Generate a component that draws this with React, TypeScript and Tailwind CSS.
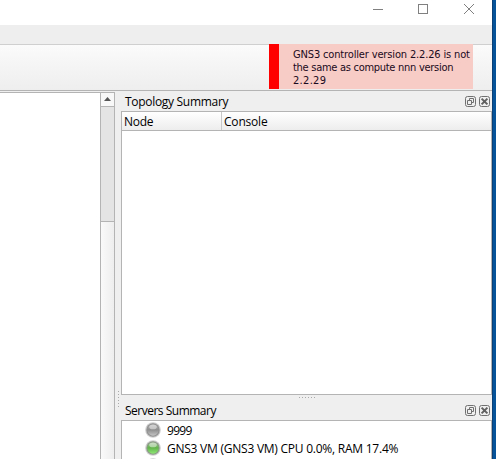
import React from "react";

const ui = "font-['Open_Sans','Noto_Sans',sans-serif] text-[12px] text-black whitespace-nowrap";

function WindowControls() {
  return (
    <svg width="104" height="14" viewBox="0 0 104 14" fill="none" stroke="#808080" className="mr-[16px] mt-[2px]" shapeRendering="crispEdges">
      <path d="M1 7.5h10M46.5 2.5h9v9h-9z" />
      <path d="M92 2l10 10M102 2l-10 10" shapeRendering="auto" />
    </svg>
  );
}

function DockButtons() {
  return (
    <div className="flex gap-[3px] pt-px">
      <svg width="11" height="11" viewBox="0 0 11 11" fill="none" stroke="#707070">
        <rect x=".5" y=".5" width="10" height="10" rx="2" />
        <path d="M4.5 4.5v-2h4v4h-2M2.5 4.5h4v4h-4z" />
      </svg>
      <svg width="11" height="11" viewBox="0 0 11 11" fill="none" stroke="#707070">
        <rect x=".5" y=".5" width="10" height="10" rx="2" />
        <path d="M2.6 2.6l5.8 5.8M8.4 2.6L2.6 8.4" stroke="#606060" strokeWidth="2" />
      </svg>
    </div>
  );
}

function DockTitle({ title, spacing }: { title: string; spacing: string }) {
  return (
    <div className="flex h-[20px] items-center justify-between pl-[4px] pr-[2px]">
      <span className={`${ui} ${spacing} pt-[2px] leading-[20px]`}>{title}</span>
      <DockButtons />
    </div>
  );
}

function Light({ green }: { green?: boolean }) {
  const id = green ? "green" : "gray";
  return (
    <svg width="16" height="16" viewBox="0 0 16 16" className="-mt-px shrink-0">
      <defs>
        <linearGradient id={id} x1="0" y1="0" x2="0" y2="1">
          <stop offset="0" stopColor={green ? "#a7bf9e" : "#b5b5b5"} />
          <stop offset=".48" stopColor={green ? "#63b44c" : "#8e8e8e"} />
          <stop offset="1" stopColor={green ? "#8ee874" : "#c4c4c4"} />
        </linearGradient>
      </defs>
      <circle cx="8" cy="8" r="7.8" fill="#cecece" />
      <circle cx="8" cy="8" r="6.7" fill={green ? "#8a9986" : "#919191"} />
      <circle cx="8" cy="8" r="5.7" fill={`url(#${id})`} />
      <ellipse cx="8" cy="5" rx="3.8" ry="2.3" fill="#fff" opacity=".45" />
    </svg>
  );
}

function Server({ name, green, spacing }: { name: string; green?: boolean; spacing: string }) {
  return (
    <div className="flex h-[18px] shrink-0 items-center pl-[23px]">
      <Light green={green} />
      <span className={`${ui} ${spacing} ml-[6px] pt-[2px] leading-[18px]`}>{name}</span>
    </div>
  );
}

export default function App() {
  return (
    <div className="flex h-[459px] w-[496px] overflow-hidden bg-[#efefef]">
      <div className="flex w-[492px] shrink-0 flex-col">
        <div className="flex h-[25px] shrink-0 justify-end bg-white">
          <WindowControls />
        </div>
        <div className="h-[19px] shrink-0 bg-[#eeeeee]" />
        <div className="flex h-[47px] shrink-0 justify-end border-b border-[#b4b4b4] bg-linear-to-b from-[#fbfbfb] to-[#eeeeee]">
          <div className="h-full flex-1 border-t border-[#cfcfcf]" />
          <div className="h-[45px] w-[204px] border-l-[10px] border-[#ff0000] bg-[#f8ccc6] pl-[14px] pt-[4px] font-['DejaVu_Sans_Condensed','DejaVu_Sans',sans-serif] text-[11px] leading-[13px] text-[#1a0a20] whitespace-nowrap">
            <div className="tracking-[-0.15px]">GNS3 controller version 2.2.26 is not</div>
            <div className="tracking-[-0.28px]">the same as compute nnn version</div>
            <div className="tracking-[0.3px]">2.2.29</div>
          </div>
          <div className="h-full w-[19px] border-t border-[#cfcfcf]" />
        </div>
        <div className="flex min-h-0 flex-1">
          <div className="mt-px flex w-[115px] shrink-0 border-r border-t border-[#b4b4b4] bg-white">
            <div className="flex-1" />
            <div className="flex w-[14px] flex-col border-l border-[#b4b4b4] bg-linear-to-r from-[#fafafa] to-[#eeeeee]">
              <div className="flex h-[14px] shrink-0 items-center justify-center border-b border-[#b4b4b4] bg-[#f8f8f8]">
                <svg width="7" height="4" viewBox="0 0 7 4" className="mb-px"><path d="M0 4L3.5 0 7 4z" fill="#555" /></svg>
              </div>
              <div className="h-[115px] shrink-0 border-b border-[#b4b4b4] bg-[#e4e4e4]" />
            </div>
          </div>
          <div className="flex w-[6px] shrink-0 flex-col items-center gap-[2px] pt-[300px]">
            {[0, 1, 2, 3, 4, 5].map((i) => <div key={i} className="size-px bg-[#aaa]" />)}
          </div>
          <div className="flex w-[371px] shrink-0 flex-col">
            <DockTitle title="Topology Summary" spacing="tracking-[-0.3px]" />
            <div className="h-[284px] shrink-0 border border-[#b4b4b4] bg-white">
              <div className={`${ui} flex h-[19px] border-b border-[#b4b4b4] bg-linear-to-b from-white to-[#ededed] leading-[20px]`}>
                <div className="w-[100px] border-r border-[#c8c8c8] pl-[2px] tracking-[-0.3px]">Node</div>
                <div className="pl-[2px] tracking-[-0.2px]">Console</div>
              </div>
            </div>
            <div className="flex h-[5px] shrink-0 justify-center gap-[2px] pt-[2px]">
              {[0, 1, 2, 3, 4, 5].map((i) => <div key={i} className="size-px bg-[#aaa]" />)}
            </div>
            <DockTitle title="Servers Summary" spacing="tracking-[-0.5px]" />
            <div className="flex min-h-0 flex-1 flex-col overflow-hidden border border-b-0 border-[#b4b4b4] bg-white">
              <Server name="9999" spacing="tracking-[-0.7px]" />
              <Server name="GNS3 VM (GNS3 VM) CPU 0.0%, RAM 17.4%" spacing="tracking-[-0.24px]" green />
              <Server name="" spacing="" />
            </div>
          </div>
        </div>
      </div>
      <div className="w-[4px] shrink-0 border-l border-[#0a4076] bg-[#06539a]" />
    </div>
  );
}
